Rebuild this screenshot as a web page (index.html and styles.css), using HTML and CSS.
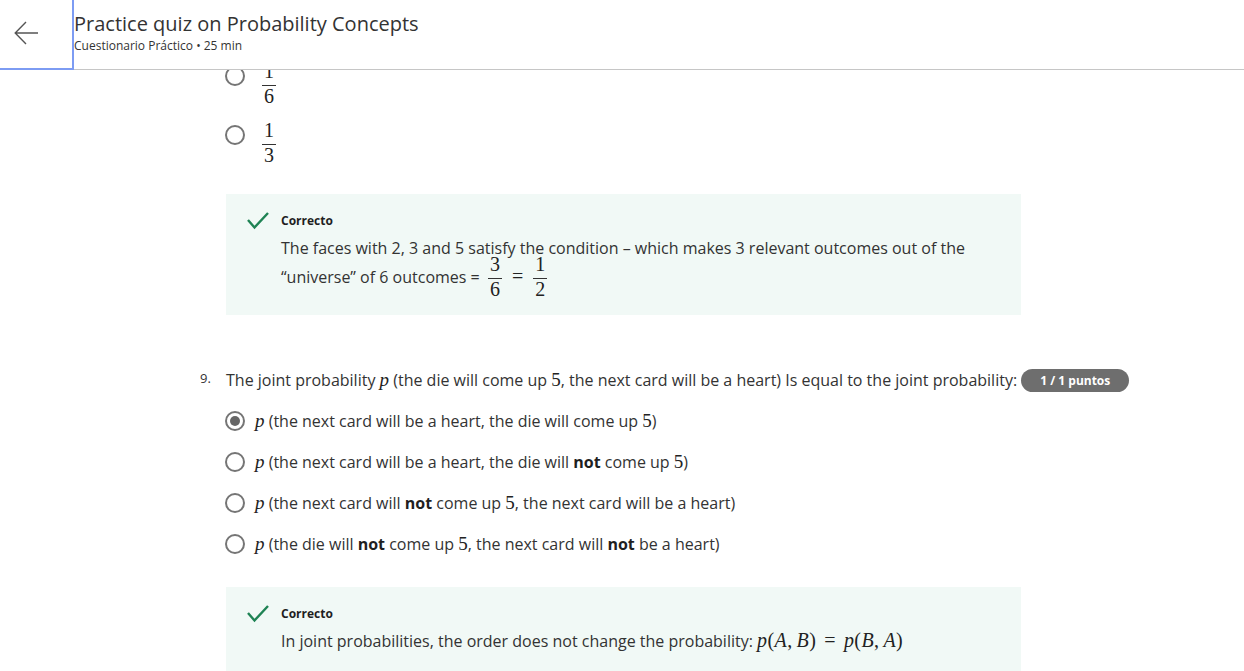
FILE: index.html
```html
<!DOCTYPE html>
<html lang="es">
<head>
<meta charset="utf-8">
<title>Practice quiz on Probability Concepts</title>
<link rel="stylesheet" href="styles.css">
</head>
<body>
<header class="topbar">
  <div class="back">
    <svg width="25" height="25" viewBox="0 0 25 25" aria-hidden="true"><path d="M24 12H1.2M12 1L1.2 12L12 23" fill="none" stroke="#555" stroke-width="1.4"/></svg>
  </div>
  <div class="titles">
    <h1 class="title">Practice quiz on Probability Concepts</h1>
    <div class="subtitle">Cuestionario Práctico • 25 min</div>
  </div>
</header>

<main class="page">
  <section class="q">
    <div class="qnum"></div>
    <div class="qbody">
      <div class="opts-frac">
        <div class="opt-frac"><span class="radio"></span><span class="frac"><span class="n">1</span><span class="d">6</span></span></div>
        <div class="opt-frac"><span class="radio"></span><span class="frac"><span class="n">1</span><span class="d">3</span></span></div>
      </div>
      <div class="feedback fb1">
        <svg class="check" width="22" height="18" viewBox="0 0 22 18" aria-hidden="true"><polyline points="1,8 7.5,15.5 21,1" fill="none" stroke="#1f8354" stroke-width="2.4"/></svg>
        <div class="fb-body">
          <div class="fb-title">Correcto</div>
          <div class="fb-text">The faces with 2, 3 and 5 satisfy the condition – which makes 3 relevant outcomes out of the “universe” of 6 outcomes = <span class="frac inl"><span class="n">3</span><span class="d">6</span></span><span class="m eq">=</span><span class="frac inl"><span class="n">1</span><span class="d">2</span></span></div>
        </div>
      </div>
    </div>
  </section>

  <section class="q q9">
    <div class="qnum">9.</div>
    <div class="qbody">
      <div class="prompt">The joint probability <span class="m mi">p</span> (the die will come up <span class="m">5</span>, the next card will be a heart) Is equal to the joint probability: <span class="badge">1 / 1 puntos</span></div>
      <div class="opts">
        <div class="opt"><span class="radio on"></span><span><span class="m mi">p</span> (the next card will be a heart, the die will come up <span class="m">5</span>)</span></div>
        <div class="opt"><span class="radio"></span><span><span class="m mi">p</span> (the next card will be a heart, the die will <b>not</b> come up <span class="m">5</span>)</span></div>
        <div class="opt"><span class="radio"></span><span><span class="m mi">p</span> (the next card will <b>not</b> come up <span class="m">5</span>, the next card will be a heart)</span></div>
        <div class="opt"><span class="radio"></span><span><span class="m mi">p</span> (the die will <b>not</b> come up <span class="m">5</span>, the next card will <b>not</b> be a heart)</span></div>
      </div>
      <div class="feedback fb2">
        <svg class="check" width="22" height="18" viewBox="0 0 22 18" aria-hidden="true"><polyline points="1,8 7.5,15.5 21,1" fill="none" stroke="#1f8354" stroke-width="2.4"/></svg>
        <div class="fb-body">
          <div class="fb-title">Correcto</div>
          <div class="fb-text">In joint probabilities, the order does not change the probability: <span class="m expr"><i>p</i>(<i>A</i>,<span class="sp"></span><i>B</i>)<span class="eq">=</span><i>p</i>(<i>B</i>,<span class="sp"></span><i>A</i>)</span></div>
        </div>
      </div>
    </div>
  </section>
</main>
</body>
</html>
```

FILE: styles.css
```css
* { box-sizing: border-box; }
html, body { margin: 0; padding: 0; background: #fff; overflow: hidden; }
body {
  font-family: "Open Sans", sans-serif;
  font-size: 16px;
  line-height: 24px;
  color: #333;
}

.topbar {
  position: fixed;
  top: 0;
  left: 0;
  right: 0;
  height: 70px;
  background: #fff;
  border-bottom: 1px solid #c6c6c6;
  display: flex;
  align-items: flex-start;
  z-index: 10;
}
.back {
  flex: none;
  width: 74px;
  height: 70px;
  padding: 21px 0 0 14px;
  background: #fff;
  border-right: 2px solid #7d9cf3;
  border-bottom: 2px solid #7d9cf3;
}
.back svg { display: block; }
.titles { padding-top: 10px; }
.title {
  margin: 0;
  font-size: 20px;
  line-height: 28px;
  font-weight: 400;
  color: #333;
}
.subtitle {
  font-size: 12px;
  line-height: 16px;
  color: #333;
}

.page { padding: 61px 0 0 200px; }
.q { display: flex; }
.qnum {
  flex: none;
  width: 26px;
  font-size: 13px;
  line-height: 20px;
  color: #333;
}
.qbody { flex: 1; min-width: 0; }
.q9 { margin-top: 53px; }

.radio {
  flex: none;
  width: 20px;
  height: 20px;
  margin-left: -1px;
  border: 2px solid #757575;
  border-radius: 50%;
  display: flex;
  align-items: center;
  justify-content: center;
  background: #fff;
}
.radio.on::after {
  content: "";
  width: 10px;
  height: 10px;
  border-radius: 50%;
  background: #666;
}

.opts-frac { display: flex; flex-direction: column; gap: 10px; }
.opt-frac { display: flex; align-items: flex-start; gap: 17px; }
.opt-frac .radio { margin-top: 5px; }

.frac {
  display: inline-flex;
  flex-direction: column;
  vertical-align: middle;
  font-family: "Liberation Serif", serif;
  font-size: 20px;
  line-height: 20px;
  text-align: center;
  color: #222;
}
.frac .n { padding: 0 2px 4px; border-bottom: 1px solid #333; }
.frac .d { padding: 0 2px 4px; }
.frac.inl { margin: -6px 4px; }

.m {
  font-family: "Liberation Serif", serif;
  font-size: 19px;
  line-height: 1;
  color: #222;
}
.m i, .mi { font-style: italic; }
.m.eq, .m .eq { margin: 0 6px; font-size: 20px; }
.expr { font-size: 20px; letter-spacing: 0.4px; }
.expr .eq { margin: 0 8px; }
.sp { display: inline-block; width: 4px; }

.feedback {
  width: 795px;
  background: #f1f9f6;
  padding: 18px 21px;
  display: flex;
  align-items: flex-start;
  gap: 12px;
}
.fb1 { margin-top: 25px; }
.fb2 { margin-top: 31px; }
.check { flex: none; display: block; }
.fb-body { flex: 1; min-width: 0; }
.fb-title {
  font-size: 12px;
  line-height: 18px;
  font-weight: 700;
  color: #1f1f1f;
}
.fb-text { margin-top: 6px; }

.prompt { line-height: 24px; }
.badge {
  display: inline-block;
  vertical-align: top;
  height: 23px;
  margin-top: 1px;
  padding: 0 19px;
  border-radius: 12px;
  background: #6e6e6e;
  color: #fff;
  font-size: 12px;
  line-height: 23px;
  font-weight: 700;
}

.opts {
  margin-top: 17px;
  display: flex;
  flex-direction: column;
  gap: 17px;
}
.opt { display: flex; align-items: center; gap: 10px; }
b { font-weight: 700; color: #1f1f1f; }
```
